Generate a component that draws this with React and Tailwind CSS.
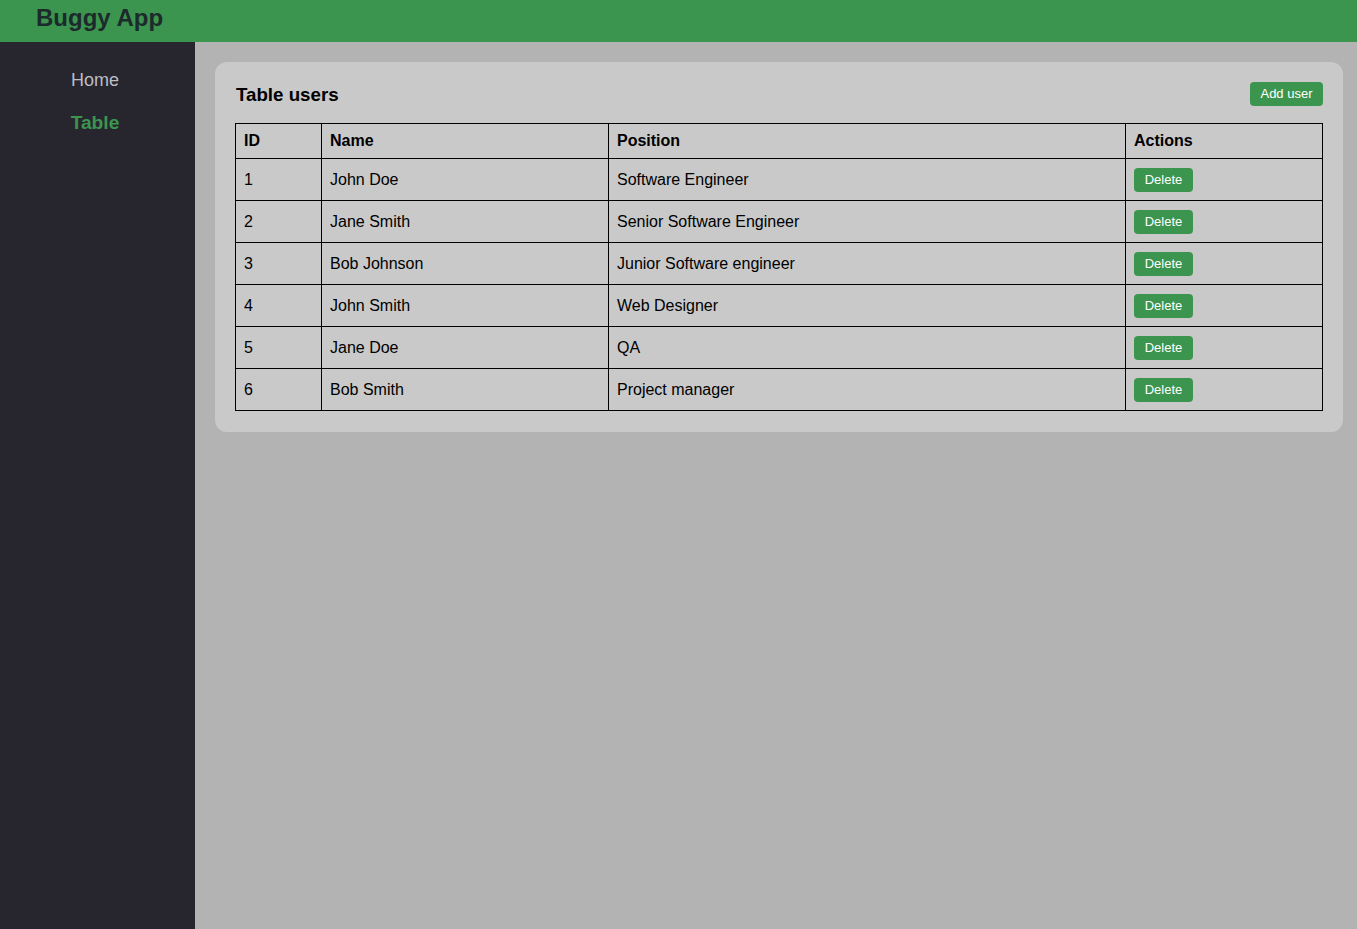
import React, { useState } from 'react';

const initialUsers = [
    { id: 1, name: 'John Doe', position: 'Software Engineer' },
    { id: 2, name: 'Jane Smith', position: 'Senior Software Engineer' },
    { id: 3, name: 'Bob Johnson', position: 'Junior Software engineer' },
    { id: 4, name: 'John Smith', position: 'Web Designer' },
    { id: 5, name: 'Jane Doe', position: 'QA' },
    { id: 6, name: 'Bob Smith', position: 'Project manager' },
];

function App() {
    const [users, setUsers] = useState(initialUsers);

    const deleteUser = (id) => {
        setUsers(users.filter((u) => u.id !== id));
    };

    return (
        <div className="min-h-screen flex flex-col font-['Liberation_Sans',Arial,sans-serif]">
            {/* Header */}
            <header className="h-[42px] bg-[#3c954f] flex items-center px-[36px] shrink-0">
                <h1 className="text-[24px] font-bold text-[#1c2a2b] leading-none -mt-[6px]">Buggy App</h1>
            </header>

            <div className="flex flex-1">
                {/* Sidebar */}
                <nav className="w-[195px] bg-[#27262e] shrink-0 flex flex-col items-center pt-[27px] pr-[5px]">
                    <a href="#" className="text-[18px] text-[#bdbdc4] leading-[22px]">Home</a>
                    <a href="#" className="text-[19.2px] font-bold text-[#3c954f] leading-[24px] mt-[20px]">Table</a>
                </nav>

                {/* Content */}
                <main className="flex-1 bg-[#b3b3b3] pl-5 pr-[14px] pt-5">
                    <div className="bg-[#c9c9c9] rounded-[12px] pl-[20px] pr-[20px] pt-[20px] pb-[21px]">
                        <div className="flex items-start justify-between mb-[17px] h-[24px]">
                            <h2 className="text-[18.72px] font-bold text-black leading-6 pl-px pt-px">Table users</h2>
                            <button className="bg-[#3c954f] text-white text-[13px] h-[24px] px-[10px] w-[73px] rounded-[4px]">
                                Add user
                            </button>
                        </div>

                        <table className="w-full border-collapse text-[16px] text-black">
                            <thead>
                                <tr className="h-[35px]">
                                    <th className="border border-black text-left font-bold px-2 w-[86px]">ID</th>
                                    <th className="border border-black text-left font-bold px-2 w-[287px]">Name</th>
                                    <th className="border border-black text-left font-bold px-2 w-[517px]">Position</th>
                                    <th className="border border-black text-left font-bold px-2">Actions</th>
                                </tr>
                            </thead>
                            <tbody>
                                {users.map((user) => (
                                    <tr key={user.id} className="h-[42px]">
                                        <td className="border border-black px-2">{user.id}</td>
                                        <td className="border border-black px-2">{user.name}</td>
                                        <td className="border border-black px-2">{user.position}</td>
                                        <td className="border border-black px-2">
                                            <button
                                                onClick={() => deleteUser(user.id)}
                                                className="bg-[#3c954f] text-white text-[13px] h-[24px] w-[59px] rounded-[4px] align-middle"
                                            >
                                                Delete
                                            </button>
                                        </td>
                                    </tr>
                                ))}
                            </tbody>
                        </table>
                    </div>
                </main>
            </div>
        </div>
    );
}

export default App;
